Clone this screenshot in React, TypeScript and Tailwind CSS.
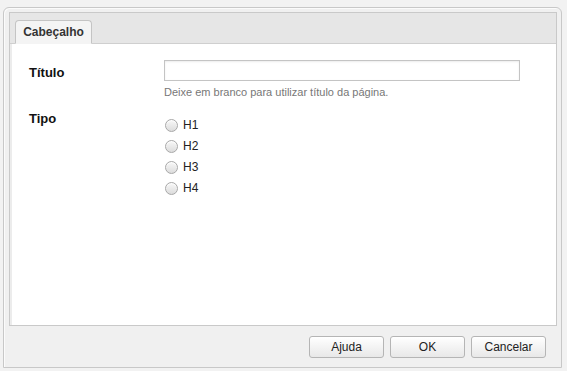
import React from "react";

const font = { fontFamily: '"Liberation Sans", Arial, sans-serif' };

function Radio({ label }: { label: string }) {
  return (
    <label className="flex items-center h-[21px] gap-[5px]">
      <span className="w-[13px] h-[13px] rounded-full border border-[#a8a8a8] bg-gradient-to-b from-[#f8f8f8] to-[#dcdcdc] shadow-[inset_0_1px_1px_rgba(255,255,255,0.9)]" />
      <span className="text-[12px] text-[#222]">{label}</span>
    </label>
  );
}

function Btn({ label }: { label: string }) {
  return (
    <button className="w-[75px] h-[22px] rounded-[3px] border border-[#b5b5b5] bg-gradient-to-b from-[#ffffff] to-[#e8e8e8] text-[12px] text-[#222] shadow-[inset_0_1px_0_#fff]">
      {label}
    </button>
  );
}

export default function App() {
  return (
    <div className="w-[567px] h-[371px] bg-[#f2f2f2] pt-[7px] pl-[3px]" style={font}>
      <div className="w-[559px] h-[361px] border border-[#c8c8c8] rounded-t-[6px] bg-[#f0f0f0] shadow-[inset_1px_1px_0_#fbfbfb] pt-[4px] pl-[5px] pr-[4px] flex flex-col">
        <div className="w-[548px] h-[314px] border border-[#c9c9c9] flex flex-col">
          <div className="h-[31px] bg-[#e6e6e6] border-b border-[#cfcfcf] flex items-end pl-[5px] shrink-0">
            <div className="h-[24px] w-[77px] -mb-px bg-[#f4f4f4] border border-[#c4c4c4] border-b-[#f4f4f4] rounded-t-[4px] flex items-center justify-center text-[12px] font-bold text-[#333]">
              Cabeçalho
            </div>
          </div>
          <div className="flex-1 bg-white border-l-[2px] border-l-[#ececec] pl-[17px] pt-[16px]">
            <div className="flex">
              <div className="w-[135px] text-[13px] font-bold text-[#111] pt-[3px]">Título</div>
              <div className="flex flex-col">
                <div className="w-[356px] h-[21px] border border-[#c4c4c4] bg-white shadow-[inset_0_1px_2px_rgba(0,0,0,0.08)]" />
                <div className="text-[11px] text-[#777] mt-[3px]">Deixe em branco para utilizar título da página.</div>
              </div>
            </div>
            <div className="flex mt-[8px]">
              <div className="w-[135px] text-[13px] font-bold text-[#111]">Tipo</div>
              <div className="flex flex-col pt-[6px] pl-[1px]">
                <Radio label="H1" />
                <Radio label="H2" />
                <Radio label="H3" />
                <Radio label="H4" />
              </div>
            </div>
          </div>
        </div>
        <div className="flex justify-end gap-[6px] pr-[11px] mt-[10px]">
          <Btn label="Ajuda" />
          <Btn label="OK" />
          <Btn label="Cancelar" />
        </div>
      </div>
    </div>
  );
}
